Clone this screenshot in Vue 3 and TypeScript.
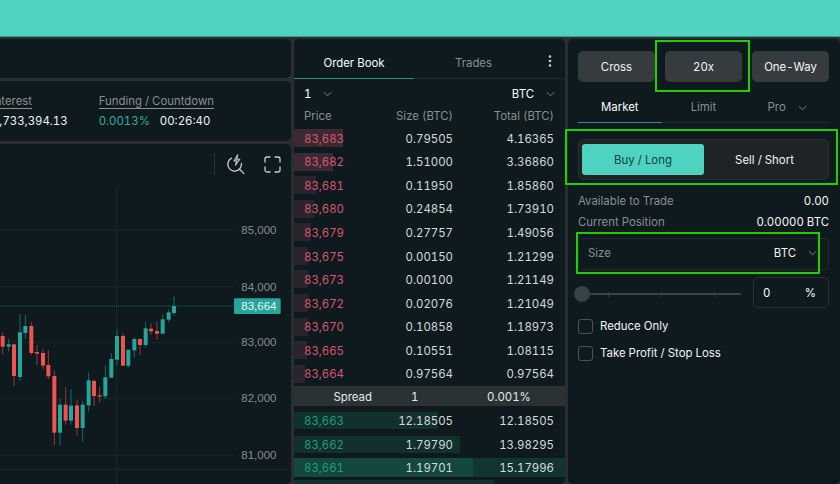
<script setup lang="ts">
interface Candle { x: number; top: number; bottom: number; high: number; low: number; up: boolean }
const raw: [number, number, number, number, number, number][] = [
  [8, 438, 470, 427, 493, 0], [26, 463, 470, 446, 485, 1], [42, 463, 558, 463, 588, 0], [60, 427, 561, 372, 572, 1],
  [76, 408, 429, 375, 447, 1], [94, 408, 489, 395, 495, 0], [111, 486, 491, 465, 525, 0], [129, 489, 527, 478, 538, 0],
  [145, 525, 559, 480, 568, 0], [163, 558, 728, 542, 765, 0], [180, 644, 728, 626, 767, 1], [197, 644, 692, 592, 704, 0],
  [213, 647, 692, 597, 704, 1], [231, 646, 714, 630, 737, 0], [248, 644, 714, 632, 755, 1], [266, 571, 646, 548, 665, 1],
  [282, 573, 618, 567, 648, 0], [299, 616, 620, 590, 638, 0], [316, 562, 619, 526, 627, 1], [334, 507, 563, 490, 563, 1],
  [351, 438, 509, 418, 527, 1], [369, 438, 527, 430, 527, 0], [385, 479, 527, 479, 533, 1], [403, 447, 481, 441, 502, 1],
  [420, 447, 465, 445, 495, 0], [437, 415, 465, 395, 472, 1], [453, 416, 424, 400, 435, 0], [471, 423, 431, 395, 449, 0],
  [488, 388, 431, 373, 431, 1], [506, 367, 389, 358, 397, 1], [522, 348, 369, 319, 376, 1],
]
const candles: Candle[] = raw.map(([x, top, bottom, high, low, up]) => ({ x, top, bottom, high, low, up: up === 1 }))
const axis = [
  { y: 120, label: '85,000' }, { y: 290, label: '84,000' }, { y: 457, label: '83,000' },
  { y: 625, label: '82,000' }, { y: 796, label: '81,000' },
]
const asks = [
  ['83,683', '0.79505', '4.16365', 49], ['83,682', '1.51000', '3.36860', 39], ['83,681', '0.11950', '1.85860', 22],
  ['83,680', '0.24854', '1.73910', 20], ['83,679', '0.27757', '1.49056', 17], ['83,675', '0.00150', '1.21299', 14],
  ['83,673', '0.00100', '1.21149', 14], ['83,672', '0.02076', '1.21049', 14], ['83,670', '0.10858', '1.18973', 14],
  ['83,665', '0.10551', '1.08115', 13], ['83,664', '0.97564', '0.97564', 11],
] as const
const bids = [
  { price: '83,663', size: '12.18505', total: '12.18505', w: 144, hot: false },
  { price: '83,662', size: '1.79790', total: '13.98295', w: 166, hot: false },
  { price: '83,661', size: '1.19701', total: '15.17996', w: 179, hot: true },
]
</script>

<template>
  <div class="page">
    <div class="banner"></div>
    <div class="main">
      <section class="left">
        <div class="panel top-strip"></div>
        <div class="panel stats">
          <div class="stat">
            <span class="stat-label">Open Interest</span>
            <span class="stat-value">$2,104,733,394.13</span>
          </div>
          <div class="stat">
            <span class="stat-label">Funding / Countdown</span>
            <span class="stat-value"><span class="up">0.0013%</span><span class="count">00:26:40</span></span>
          </div>
        </div>
        <div class="panel chart">
          <svg class="chart-svg" viewBox="0 -138 870 1020" width="290" height="340">
            <line x1="350" x2="350" y1="-10" y2="882" class="grid" />
            <line v-for="a in axis" :key="a.y" x1="0" x2="702" :y1="a.y" :y2="a.y" class="grid" />
            <line x1="0" x2="870" y1="838" y2="838" class="grid strong" />
            <line x1="0" x2="702" y1="348" y2="348" class="last-line" />
            <g v-for="c in candles" :key="c.x">
              <line :x1="c.x" :x2="c.x" :y1="c.high" :y2="c.low" :class="c.up ? 'wick-up' : 'wick-down'" />
              <rect :x="c.x - 6" :y="c.top" width="12" :height="c.bottom - c.top" :class="c.up ? 'body-up' : 'body-down'" />
            </g>
            <text v-for="a in axis" :key="a.label" x="724" :y="a.y + 12" class="axis">{{ a.label }}</text>
            <rect x="702" y="325" width="140" height="47" rx="4" class="tag" />
            <text x="724" y="360" class="tag-text">83,664</text>
          </svg>
          <div class="tools">
            <span class="tool-sep"></span>
            <svg class="tool-icon search" width="18" height="21" viewBox="0 0 18 21" fill="none">
              <path d="M4.6 4.2A6.8 6.8 0 1 0 14.4 9.4" />
              <path d="M12.4 15 L17 19.6" />
              <path class="bolt" d="M10.6 0.8 L6.8 7 H9.4 L8.4 11.4 L13 5.2 H10.2 Z" />
            </svg>
            <svg class="tool-icon expand" width="17" height="17" viewBox="0 0 17 17" fill="none">
              <path d="M1 6V3a2 2 0 0 1 2-2h3M11 1h3a2 2 0 0 1 2 2v3M16 11v3a2 2 0 0 1-2 2h-3M6 16H3a2 2 0 0 1-2-2v-3" />
            </svg>
          </div>
        </div>
      </section>

      <section class="panel book">
        <div class="book-tabs">
          <span class="book-tab active">Order Book</span>
          <span class="book-tab">Trades</span>
          <svg class="dots" width="4" height="12" viewBox="0 0 4 12"><circle cx="2" cy="1.5" r="1.3" /><circle cx="2" cy="6" r="1.3" /><circle cx="2" cy="10.5" r="1.3" /></svg>
        </div>
        <div class="book-select">
          <span class="sel">1<svg class="chev" width="9" height="6" viewBox="0 0 10 6" fill="none"><path d="M1 1l4 4 4-4" /></svg></span>
          <span class="sel">BTC<svg class="chev" width="9" height="6" viewBox="0 0 10 6" fill="none"><path d="M1 1l4 4 4-4" /></svg></span>
        </div>
        <div class="book-row book-head">
          <span>Price</span><span>Size (BTC)</span><span>Total (BTC)</span>
        </div>
        <div class="asks">
          <div v-for="r in asks" :key="r[0]" class="book-row level">
            <i class="depth ask-depth" :style="{ width: r[3] + 'px' }"></i>
            <span class="ask">{{ r[0] }}</span><span>{{ r[1] }}</span><span>{{ r[2] }}</span>
          </div>
        </div>
        <div class="spread"><span>Spread</span><span>1</span><span>0.001%</span></div>
        <div class="bids">
          <div v-for="r in bids" :key="r.price" class="book-row level" :class="{ hot: r.hot }">
            <i class="depth bid-depth" :style="{ width: r.w + 'px' }"></i>
            <span class="bid">{{ r.price }}</span><span>{{ r.size }}</span><span>{{ r.total }}</span>
          </div>
          <div class="book-row level"><i class="depth bid-depth next-depth"></i></div>
        </div>
      </section>

      <section class="panel order">
        <div class="mode-row">
          <button class="mode">Cross</button>
          <button class="mode highlighted">20x</button>
          <button class="mode">One-Way</button>
        </div>
        <div class="order-tabs">
          <span class="order-tab active">Market</span>
          <span class="order-tab">Limit</span>
          <span class="order-tab">Pro<svg class="chev pro" width="9" height="6" viewBox="0 0 10 6" fill="none"><path d="M1 1l4 4 4-4" /></svg></span>
        </div>
        <div class="side highlighted-wide">
          <span class="side-btn on">Buy / Long</span>
          <span class="side-btn">Sell / Short</span>
        </div>
        <div class="info"><span>Available to Trade</span><b>0.00</b></div>
        <div class="info second"><span>Current Position</span><b>0.00000 BTC</b></div>
        <div class="size highlighted-size">
          <span class="size-label">Size</span>
          <span class="sel">BTC<svg class="chev" width="9" height="6" viewBox="0 0 10 6" fill="none"><path d="M1 1l4 4 4-4" /></svg></span>
        </div>
        <div class="slider-row">
          <div class="slider">
            <i class="tick" v-for="n in 3" :key="n"></i>
            <span class="knob"></span>
          </div>
          <div class="pct"><span>0</span><span>%</span></div>
        </div>
        <label class="check"><span class="box"></span>Reduce Only</label>
        <label class="check last"><span class="box"></span>Take Profit / Stop Loss</label>
      </section>
    </div>
  </div>
</template>

<style>
html, body { margin: 0; background: #2a2e30; }
</style>

<style scoped>
.page {
  width: 840px; height: 484px; overflow: hidden; background: #2a2e30;
  font-family: Inter, "Noto Sans", sans-serif; font-size: 11.4px; color: #f6fefd;
  font-feature-settings: "tnum"; display: flex; flex-direction: column;
}
.banner { height: 36px; flex: none; background: #50d2c1; border-bottom: 1px solid #3d9c8f; }
.main { flex: 1; min-height: 0; display: flex; gap: 3px; padding-top: 2px; }
.panel { background: #0f1a1f; border-radius: 5px; }
.left { width: 291px; flex: none; display: flex; flex-direction: column; gap: 3px; }
.left .panel { border-radius: 0 5px 5px 0; }
.top-strip { height: 39px; flex: none; }
.stats {
  height: 60px; flex: none; display: flex; justify-content: flex-end; gap: 31px; padding: 0 77px 0 0;
  align-items: center; overflow: hidden;
}
.stat { display: flex; flex-direction: column; gap: 5px; flex: none; }
.stat-label { color: #878f8f; border-bottom: 1px solid #878f8f; align-self: flex-start; line-height: 14px; }
.stat-value { line-height: 15px; white-space: nowrap; color: #eef3f2; }
.up { color: #2eae9c; }
.count { margin-left: 10px; }
.chart { flex: 1; min-height: 0; position: relative; overflow: hidden; }
.chart-svg { display: block; }
.grid { stroke: #1b262b; stroke-width: 3; }
.grid.strong { stroke: #202b2f; }
.last-line { stroke: #17695f; stroke-width: 3; stroke-dasharray: 3 3; }
.wick-up { stroke: #0e6f64; stroke-width: 3; }
.wick-down { stroke: #9a3436; stroke-width: 3; }
.body-up { fill: #26a69a; }
.body-down { fill: #ef5350; }
.axis { font-size: 34.5px; fill: #868c8c; font-family: "Liberation Sans", sans-serif; }
.tag { fill: #26a69a; }
.tag-text { font-size: 34.5px; fill: #e8f5f3; font-family: "Liberation Sans", sans-serif; }
.tools { position: absolute; top: 9px; right: 10px; display: flex; align-items: center; height: 22px; }
.tool-sep { width: 1px; height: 22px; background: #2a3337; margin-right: 12px; }
.tool-icon { stroke: #c8cdcc; stroke-width: 1.3; stroke-linecap: round; stroke-linejoin: round; }
.expand { margin-left: 19px; }
.bolt { fill: #6c7474; stroke: #c8cdcc; stroke-width: 1; }

.book { width: 271px; flex: none; display: flex; flex-direction: column; overflow: hidden; }
.book-tabs { height: 40px; flex: none; display: flex; align-items: center; position: relative; border-bottom: 1px solid #1f2a2e; box-sizing: border-box; }
.book-tab { width: 119px; text-align: center; color: #878f8f; line-height: 49px; height: 40px; box-sizing: border-box; margin-bottom: -1px; }
.book-tab.active { color: #f6fefd; border-bottom: 1px solid #2f8e80; width: 120px; }
.dots { fill: #c8cdcc; position: absolute; right: 13px; top: 16px; }
.book-select { height: 29px; flex: none; display: flex; justify-content: space-between; align-items: center; padding: 0 10px; }
.sel { display: inline-flex; align-items: center; gap: 12px; }
.chev { stroke: #878f8f; stroke-width: 1; }
.book-row {
  display: grid; grid-template-columns: 59px 90px 101px; padding-left: 10px;
  height: 23.57px; align-items: center; position: relative; color: #d2dada;
}
.book-row span { text-align: right; position: relative; }
.book-row span:first-of-type { text-align: left; }
.book-head { height: 17px; color: #878f8f; margin-bottom: 4px; padding-top: 1px; box-sizing: border-box; }
.depth { position: absolute; left: 0; top: 2px; height: 18px; }
.ask-depth { background: rgba(237, 112, 136, 0.2); }
.level:nth-child(n + 3) .ask-depth { background: rgba(237, 112, 136, 0.13); }
.bid-depth { background: rgba(31, 166, 125, 0.16); top: 3px; height: 17px; }
.next-depth { width: 200px; }
.ask { color: #d9566f; }
.bid { color: #1f9d7a; }
.spread {
  height: 20px; flex: none; margin: 0 0 3px; background: #2a3234; display: grid; box-sizing: border-box; padding-top: 2px;
  grid-template-columns: 78px 115px 78px; align-items: center; color: #e3e9e8;
}
.spread span:first-child { text-align: right; }
.spread span:nth-child(2) { padding-left: 39px; }
.hot { background: rgba(31, 166, 125, 0.2); height: 19px; margin-top: 2px; }
.hot .depth { top: 0; height: 19px; }
.bids .book-row { box-sizing: border-box; }

.order { flex: 1; min-width: 0; padding: 12px 11px 0 10px; display: flex; flex-direction: column; }
.mode-row { display: flex; justify-content: space-between; }
.mode {
  width: 77px; height: 31px; border: 0; border-radius: 5px; background: #363c3e; color: #f2f6f5;
  font: inherit; padding: 0;
}
.order-tabs { display: flex; height: 41px; flex: none; border-bottom: 1px solid #1f2a2e; box-sizing: border-box; }
.order-tab { width: 84px; text-align: center; color: #878f8f; line-height: 50px; height: 41px; box-sizing: border-box; }
.order-tab.active { color: #f6fefd; border-bottom: 1px solid #2f8e80; }
.pro { margin-left: 12px; }
.side {
  margin-top: 16px; height: 41px; box-sizing: border-box; background: #1f2326; border: 1px solid #2a3033; border-radius: 5px;
  padding: 4px 3px; display: flex;
}
.side-btn { flex: 1; text-align: center; line-height: 32px; color: #f2f6f5; border-radius: 3px; }
.side-btn.on { background: #50d2c1; color: #10413c; flex: 0 0 122px; }
.info { display: flex; justify-content: space-between; margin-top: 14px; line-height: 15px; color: #878f8f; }
.info.second { margin-top: 6px; }
.info b { font-weight: 400; color: #f2f6f5; }
.size {
  margin-top: 8px; height: 32px; box-sizing: border-box; border: 1px solid #232c30; border-radius: 5px;
  display: flex; justify-content: space-between; align-items: center; padding: 0 11px 2px 9px; color: #f2f6f5;
}
.size-label { color: #878f8f; }
.slider-row { display: flex; justify-content: space-between; align-items: center; margin-top: 7px; }
.slider {
  width: 159px; height: 2px; background: #3a4244; position: relative; margin: 3px 0 0 4px;
  display: flex; justify-content: space-around; align-items: center;
}
.tick { width: 1px; height: 5px; background: #3a4244; }
.knob {
  position: absolute; left: -7px; top: -6px; width: 14px; height: 14px; border-radius: 50%;
  background: #3a4244; box-shadow: 0 0 0 1px #1f4a47;
}
.pct {
  width: 76px; height: 31px; box-sizing: border-box; border: 1px solid #2a3033; border-radius: 5px;
  display: flex; justify-content: space-between; align-items: center; padding: 0 12px 0 9px;
}
.check { display: flex; align-items: center; gap: 7px; height: 15px; line-height: 15px; margin-top: 11px; color: #f2f6f5; }
.check.last { margin-top: 12px; }
.box { width: 15px; height: 15px; box-sizing: border-box; border: 1px solid #4a5254; border-radius: 3px; }
.highlighted, .highlighted-wide, .highlighted-size { position: relative; }
.highlighted::after, .highlighted-wide::after, .highlighted-size::after {
  content: ""; position: absolute; border: 2px solid #1fd000; pointer-events: none; box-sizing: border-box;
}
.highlighted::after { left: -10px; right: -8px; top: -11px; bottom: -10px; }
.highlighted-wide::after { left: -14px; right: -10px; top: -11px; bottom: -6px; }
.highlighted-size::after { left: -3px; right: 8px; top: -7px; bottom: -5px; }
</style>
